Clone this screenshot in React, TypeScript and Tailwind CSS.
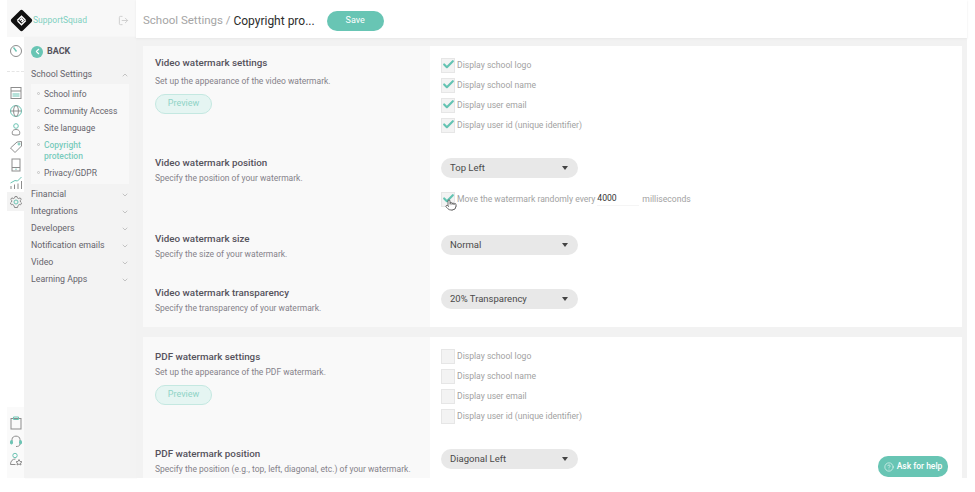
import React from "react";
import { Check, ChevronDown, ChevronLeft, ChevronUp, CircleHelp, LogOut, Pointer } from "lucide-react";

const GRAY = "#8d8d8d";
const TEAL = "#6cc4b4";

function Logo() {
  return (
    <svg width="23" height="23" viewBox="0 0 24 24" className="shrink-0">
      <rect x="3.5" y="3.5" width="17" height="17" rx="2.5" transform="rotate(45 12 12)" fill="#111" />
      <path d="M7.5 12 L12 7.5 L16 11.5 M16.5 12 L12 16.5 L8 12.5 M10.3 12 L12 10.3 L13.7 12 L12 13.7" fill="none" stroke="#fff" strokeWidth="1.5" />
    </svg>
  );
}

function RailIcon({ children }: { children: React.ReactNode }) {
  return (
    <svg width="14" height="14" viewBox="0 0 14 14" fill="none" stroke={GRAY} strokeWidth="1" className="shrink-0">
      {children}
    </svg>
  );
}

function Caret() {
  return <span className="h-0 w-0 border-x-[3px] border-t-[4px] border-x-transparent border-t-[#444]" />;
}

function Select({ label }: { label: string }) {
  return (
    <div className="flex h-[20px] w-[137px] items-center justify-between rounded-full bg-[#e8e8e8] pl-[9px] pr-[10px] text-[9.5px] text-[#4a4a4a]">
      <span>{label}</span>
      <Caret />
    </div>
  );
}

function CheckRow({ label, checked }: { label: string; checked?: boolean }) {
  return (
    <div className="flex h-[20px] items-center gap-[2px] text-[8.6px] text-[#a2a2a2]">
      <span className="relative h-[15px] w-[14px] border border-[#e6e6e6] bg-[#f3f3f3]">
        {checked && (
          <Check className="absolute -top-[1px] left-0 h-[13px] w-[13px] text-[#63c3b2]" strokeWidth={4} />
        )}
      </span>
      <span className="pt-[1px]">{label}</span>
    </div>
  );
}

function LeftCol({ title, desc, preview, tall }: { title: string; desc: string; preview?: boolean; tall?: boolean }) {
  return (
    <div className="w-[287px] shrink-0 bg-[#f9f9f9] pl-[12px]">
      <div className="text-[9.8px] font-medium leading-[14px] text-[#55525c]">{title}</div>
      <div className={`${tall ? "mt-[5px]" : "mt-[2px]"} text-[8.5px] leading-[12px] text-[#85828a]`}>{desc}</div>
      {preview && (
        <div className="mt-[7px] flex h-[20px] w-[57px] items-center justify-center rounded-full border border-[#c4e8e1] bg-[#e5f5f2] text-[9px] text-[#8fd3c6]">
          Preview
        </div>
      )}
    </div>
  );
}

function SideItem({ label, open }: { label: string; open?: boolean }) {
  return (
    <div className="flex h-[17px] items-center justify-between px-[7px] text-[8.8px] text-[#66646c]">
      <span>{label}</span>
      {open ? <ChevronUp className="h-[8px] w-[8px] text-[#aaa]" /> : <ChevronDown className="h-[8px] w-[8px] text-[#aaa]" />}
    </div>
  );
}

function SubItem({ label, active }: { label: string; active?: boolean }) {
  return (
    <div className={`relative w-[90px] pl-[13px] text-[8.5px] leading-[11px] ${active ? "font-medium text-[#7accbd]" : "text-[#66646c]"}`}>
      <span className="absolute left-[6px] top-[3px] h-[3px] w-[3px] rounded-full border border-[#c4c4c4]" />
      {label}
    </div>
  );
}

export default function App() {
  return (
    <div className="h-[492px] w-[975px] overflow-hidden bg-white font-['Roboto',sans-serif]">
      <div className="flex h-[478px] w-[967px] pl-[7px]">
        {/* left rail and menu */}
        <div className="flex w-[129px] shrink-0 flex-col">
          <div className="flex h-[37px] items-center bg-[#f8f8f8] pl-[3px] pr-[7px] pt-[3px]">
            <Logo />
            <span className="text-[8.5px] text-[#7fd0c1]">SupportSquad</span>
            <LogOut className="ml-auto h-[11px] w-[11px] text-[#ccc]" />
          </div>
          <div className="flex min-h-0 flex-1">
            <div className="flex w-[17px] shrink-0 flex-col items-center bg-white">
              <div className="flex h-[35px] w-full items-center justify-center border-b border-dashed border-[#e5e5e5] pb-[6px]">
                <RailIcon>
                  <circle cx="7" cy="7" r="5.5" />
                  <path d="M4.5 3.5 L7.5 7.5" stroke={TEAL} strokeWidth="1.4" />
                </RailIcon>
              </div>
              <div className="mt-[14px] flex flex-col items-center gap-[4px]">
                <RailIcon>
                  <rect x="2" y="1.5" width="10" height="11" />
                  <path d="M2 5 H12" />
                  <path d="M3.5 8 H10.5 M3.5 10 H10.5" stroke={TEAL} />
                </RailIcon>
                <RailIcon>
                  <circle cx="7" cy="7" r="5.5" stroke={TEAL} />
                  <ellipse cx="7" cy="7" rx="2.4" ry="5.5" />
                  <path d="M1.5 7 H12.5" />
                </RailIcon>
                <RailIcon>
                  <circle cx="7" cy="4" r="2.3" stroke={TEAL} />
                  <path d="M3.5 12.5 C2.5 9 4.5 7.5 7 7.5 C9.5 7.5 11.5 9 10.5 12.5 C9 13.3 5 13.3 3.5 12.5 Z" />
                </RailIcon>
                <RailIcon>
                  <path d="M1.5 8 L8 2 L12.5 1.5 L12.5 6 L6 12.5 Z" />
                  <circle cx="10" cy="4" r="1" stroke={TEAL} />
                </RailIcon>
                <RailIcon>
                  <rect x="3" y="1" width="8" height="12" />
                  <path d="M3 9.5 H11" />
                  <path d="M7 10.5 V12" stroke={TEAL} />
                </RailIcon>
                <RailIcon>
                  <path d="M2 13 V10 M5.5 13 V8.5 M9 13 V7.5 M12.5 13 V5" />
                  <path d="M1.5 7 L6 4.5 L8.5 5 L12.5 1" stroke={TEAL} />
                </RailIcon>
              </div>
              <div className="mt-[2px] flex h-[19px] w-full items-center justify-center bg-[#f3f3f3]">
                <RailIcon>
                  <circle cx="7" cy="7" r="2" stroke={TEAL} />
                  <path d="M6 1.5 H8 L8.4 3 L9.8 3.6 L11.1 2.8 L12.3 4.4 L11.2 5.4 L11.5 7 L12.6 8 L11.6 9.8 L10.2 9.5 L9 10.6 L8.5 12.5 H5.5 L5 10.6 L3.8 9.5 L2.4 9.8 L1.4 8 L2.5 7 L2.8 5.4 L1.7 4.4 L2.9 2.8 L4.2 3.6 L5.6 3 Z" />
                </RailIcon>
              </div>
              <div className="mt-auto flex w-full flex-col items-center gap-[4px] bg-[#fafafa] pb-[12px] pt-[9px]">
                <RailIcon>
                  <rect x="2" y="2.5" width="10" height="10.5" />
                  <path d="M4.5 1 H9.5 V3.5 H4.5 Z" stroke={TEAL} />
                </RailIcon>
                <RailIcon>
                  <path d="M3 7 V5.5 C3 1 11 1 11 5.5 V7" />
                  <rect x="1.5" y="6.5" width="2" height="3.5" rx="1" fill={TEAL} stroke={TEAL} />
                  <rect x="10.5" y="6.5" width="2" height="3.5" rx="1" fill={TEAL} stroke={TEAL} />
                  <path d="M11 10 C11 12 9 12.5 7 12.5" />
                </RailIcon>
                <RailIcon>
                  <circle cx="6" cy="3.5" r="2.2" stroke={TEAL} />
                  <path d="M1.5 12.5 C1.5 9 3.5 7 6.5 7" />
                  <path d="M1.5 12.5 H6.5" />
                  <path d="M10 7.5 L11 9.5 L13 9.8 L11.5 11 L12 13 L10 12 L8 13 L8.5 11 L7 9.8 L9 9.5 Z" />
                </RailIcon>
              </div>
            </div>
            <div className="flex-1 bg-[#f3f3f3] shadow-[1px_0_1px_#eee]">
              <div className="flex h-[29px] items-center gap-[4px] pl-[7px] text-[9px] font-bold text-[#55525c]">
                <span className="flex h-[12px] w-[12px] items-center justify-center rounded-full bg-[#68c5b4]">
                  <ChevronLeft className="h-[9px] w-[9px] text-white" strokeWidth={3} />
                </span>
                BACK
              </div>
              <SideItem label="School Settings" open />
              <div className="mx-[7px] mt-[1px] flex h-[100px] flex-col gap-[6px] bg-[#f8f8f8] pt-[5px]">
                <SubItem label="School info" />
                <SubItem label="Community Access" />
                <SubItem label="Site language" />
                <SubItem label="Copyright protection" active />
                <SubItem label="Privacy/GDPR" />
              </div>
              <div className="mt-[2px]">
                <SideItem label="Financial" />
                <SideItem label="Integrations" />
                <SideItem label="Developers" />
                <SideItem label="Notification emails" />
                <SideItem label="Video" />
                <SideItem label="Learning Apps" />
              </div>
            </div>
          </div>
        </div>

        {/* main column */}
        <div className="relative flex min-w-0 flex-1 flex-col bg-[#f2f2f2]">
          <div className="flex h-[38px] shrink-0 items-center bg-white pl-[7px] pt-[3px] shadow-[0_1px_2px_#e8e8e8]">
            <span className="whitespace-pre text-[11.5px] text-[#a5a5a5]">School Settings / </span>
            <span className="text-[12px] text-[#2c2c2c]">Copyright pro...</span>
            <div className="ml-[12px] flex h-[20px] w-[57px] items-center justify-center rounded-full bg-[#68c5b4] text-[9px] text-white">
              Save
            </div>
          </div>

          <div className="ml-[7px] mr-[5px] mt-[8px] flex min-h-0 flex-1 flex-col gap-[10px] overflow-hidden">
            {/* video watermark card */}
            <div className="flex h-[281px] shrink-0 flex-col bg-white">
              <div className="flex h-[104px]">
                <div className="h-full bg-[#f9f9f9] pt-[10px]">
                  <LeftCol
                    title="Video watermark settings"
                    desc="Set up the appearance of the video watermark."
                    preview
                    tall
                  />
                </div>
                <div className="pl-[11px] pt-[9px]">
                  <CheckRow label="Display school logo" checked />
                  <CheckRow label="Display school name" checked />
                  <CheckRow label="Display user email" checked />
                  <CheckRow label="Display user id (unique identifier)" checked />
                </div>
              </div>
              <div className="flex h-[78px]">
                <div className="h-full bg-[#f9f9f9] pt-[6px]">
                  <LeftCol title="Video watermark position" desc="Specify the position of your watermark." />
                </div>
                <div className="pl-[11px] pt-[8px]">
                  <Select label="Top Left" />
                  <div className="relative mt-[11px] flex items-center">
                    <CheckRow label="Move the watermark randomly every" checked />
                    <span className="ml-[2px] w-[42px] border-b border-[#f5f5f5] text-[8.6px] text-[#333]">4000</span>
                    <span className="ml-[3px] text-[8.6px] text-[#a2a2a2]">milliseconds</span>
                    <Pointer className="absolute left-[4px] top-[10px] h-[12px] w-[12px] fill-white text-[#333]" strokeWidth={1.4} />
                  </div>
                </div>
              </div>
              <div className="flex h-[54px]">
                <div className="h-full bg-[#f9f9f9] pt-[4px]">
                  <LeftCol title="Video watermark size" desc="Specify the size of your watermark." />
                </div>
                <div className="pl-[11px] pt-[7px]">
                  <Select label="Normal" />
                </div>
              </div>
              <div className="flex flex-1">
                <div className="h-full bg-[#f9f9f9] pt-[4px]">
                  <LeftCol title="Video watermark transparency" desc="Specify the transparency of your watermark." />
                </div>
                <div className="pl-[11px] pt-[7px]">
                  <Select label="20% Transparency" />
                </div>
              </div>
            </div>

            {/* pdf watermark card */}
            <div className="flex min-h-0 flex-1 flex-col bg-white">
              <div className="flex h-[105px] shrink-0">
                <div className="h-full bg-[#f9f9f9] pt-[13px]">
                  <LeftCol title="PDF watermark settings" desc="Set up the appearance of the PDF watermark." preview />
                </div>
                <div className="pl-[11px] pt-[9px]">
                  <CheckRow label="Display school logo" />
                  <CheckRow label="Display school name" />
                  <CheckRow label="Display user email" />
                  <CheckRow label="Display user id (unique identifier)" />
                </div>
              </div>
              <div className="flex flex-1">
                <div className="h-full bg-[#f9f9f9] pt-[5px]">
                  <LeftCol
                    title="PDF watermark position"
                    desc="Specify the position (e.g., top, left, diagonal, etc.) of your watermark."
                  />
                </div>
                <div className="pl-[11px] pt-[7px]">
                  <Select label="Diagonal Left" />
                </div>
              </div>
            </div>
          </div>

          <div className="absolute bottom-[1px] right-[19px] flex h-[21px] w-[70px] items-center justify-center gap-[3px] rounded-[10px] bg-[#68c5b4] text-[8.5px] font-medium text-white">
            <CircleHelp className="h-[10px] w-[10px]" strokeWidth={1.4} />
            Ask for help
          </div>
        </div>
      </div>
    </div>
  );
}
